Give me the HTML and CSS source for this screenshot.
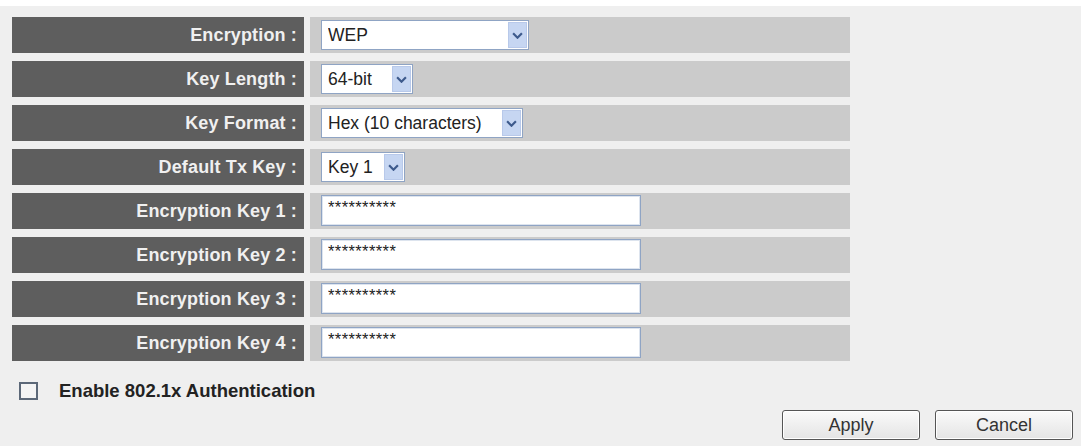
FILE: index.html
```html
<!DOCTYPE html>
<html lang="en">
<head>
  <meta charset="UTF-8" />
  <title>Wireless Security</title>
  <link rel="stylesheet" href="styles.css">
</head>
<body>

  <div class="page">

    <!-- WEP settings -->
    <div class="form-grid">
      <div class="label">Encryption :</div>
      <div class="value">
        <label class="sel w-enc">
          <select><option>WEP</option><option>WPA pre-shared key</option><option>Disable</option></select>
          <span class="arrow"><svg viewBox="0 0 10 6" width="11" height="7"><path d="M1 1 L5 5 L9 1" fill="none" stroke="#3d5a8c" stroke-width="2"/></svg></span>
        </label>
      </div>

      <div class="label">Key Length :</div>
      <div class="value">
        <label class="sel w-len">
          <select><option>64-bit</option><option>128-bit</option></select>
          <span class="arrow"><svg viewBox="0 0 10 6" width="11" height="7"><path d="M1 1 L5 5 L9 1" fill="none" stroke="#3d5a8c" stroke-width="2"/></svg></span>
        </label>
      </div>

      <div class="label">Key Format :</div>
      <div class="value">
        <label class="sel w-fmt">
          <select><option>Hex (10 characters)</option><option>ASCII (5 characters)</option></select>
          <span class="arrow"><svg viewBox="0 0 10 6" width="11" height="7"><path d="M1 1 L5 5 L9 1" fill="none" stroke="#3d5a8c" stroke-width="2"/></svg></span>
        </label>
      </div>

      <div class="label">Default Tx Key :</div>
      <div class="value">
        <label class="sel w-key">
          <select><option>Key 1</option><option>Key 2</option><option>Key 3</option><option>Key 4</option></select>
          <span class="arrow"><svg viewBox="0 0 10 6" width="11" height="7"><path d="M1 1 L5 5 L9 1" fill="none" stroke="#3d5a8c" stroke-width="2"/></svg></span>
        </label>
      </div>

      <div class="label">Encryption Key 1 :</div>
      <div class="value"><input class="key" type="text" value="**********"></div>

      <div class="label">Encryption Key 2 :</div>
      <div class="value"><input class="key" type="text" value="**********"></div>

      <div class="label">Encryption Key 3 :</div>
      <div class="value"><input class="key" type="text" value="**********"></div>

      <div class="label">Encryption Key 4 :</div>
      <div class="value"><input class="key" type="text" value="**********"></div>
    </div>

    <!-- 802.1x -->
    <label class="auth">
      <input type="checkbox">
      <span class="box"></span>
      <span>Enable 802.1x Authentication</span>
    </label>

    <div class="actions">
      <button>Apply</button>
      <button>Cancel</button>
    </div>

  </div>

</body>
</html>
```

FILE: styles.css
```css
* {
  box-sizing: border-box;
}

body {
  margin: 0;
  background: #fff;
  font-family: "Liberation Sans", Arial, sans-serif;
}

.page {
  margin-top: 6px;
  min-height: 440px;
  background: #efefef;
  padding: 11px 0 0 12px;
}

.form-grid {
  display: grid;
  grid-template-columns: 292px 540px;
  grid-auto-rows: 36px;
  column-gap: 6px;
  row-gap: 8px;
}

.label {
  background: #5e5e5e;
  color: #f0f0f0;
  font-weight: bold;
  font-size: 18px;
  letter-spacing: 0.15px;
  display: flex;
  align-items: center;
  justify-content: flex-end;
  padding-right: 7px;
}

.value {
  background: #cbcbcb;
  display: flex;
  align-items: center;
  padding-left: 11px;
}

.sel {
  display: inline-flex;
  align-items: stretch;
  height: 30px;
  background: #fff;
  border: 1px solid #8fa4c4;
  padding: 1px;
}

.sel select {
  appearance: none;
  -webkit-appearance: none;
  border: none;
  outline: none;
  background: #fff;
  flex: 1;
  min-width: 0;
  padding: 0 0 0 5px;
  font-family: "Liberation Sans", Arial, sans-serif;
  font-size: 17.5px;
  color: #222;
}

.sel .arrow {
  width: 19px;
  background: #c6d6f2;
  border: 1px solid #b8c9ea;
  display: flex;
  align-items: center;
  justify-content: center;
}

.w-enc { width: 208px; }
.w-len { width: 92px; }
.w-fmt { width: 202px; }
.w-key { width: 84px; }

.key {
  width: 320px;
  height: 31px;
  margin-top: -1px;
  border: 1px solid #8fa4c4;
  box-shadow: inset 0 0 0 1px #dde4ee;
  background: #fff;
  padding: 0 0 6px 6px;
  font-family: "Liberation Sans", Arial, sans-serif;
  font-size: 16.5px;
  color: #222;
  letter-spacing: 0.4px;
}

.auth {
  display: flex;
  align-items: center;
  gap: 21px;
  margin-top: 21px;
  padding-left: 7px;
  height: 18px;
  font-weight: bold;
  font-size: 18.5px;
  color: #222;
}

.auth input {
  display: none;
}

.auth .box {
  width: 19px;
  height: 18px;
  border: 2px solid #5c6878;
  background: #f4f4f4;
}

.actions {
  display: flex;
  justify-content: flex-end;
  gap: 15px;
  margin-top: 10px;
  padding-right: 8px;
}

.actions button {
  width: 138px;
  height: 30px;
  border: 1px solid #555;
  border-radius: 3px;
  background: linear-gradient(#fafafa, #e4e4e4);
  box-shadow: inset 0 0 0 1px #fff;
  font-family: "Liberation Sans", Arial, sans-serif;
  font-size: 18px;
  color: #333;
  cursor: pointer;
}
```
